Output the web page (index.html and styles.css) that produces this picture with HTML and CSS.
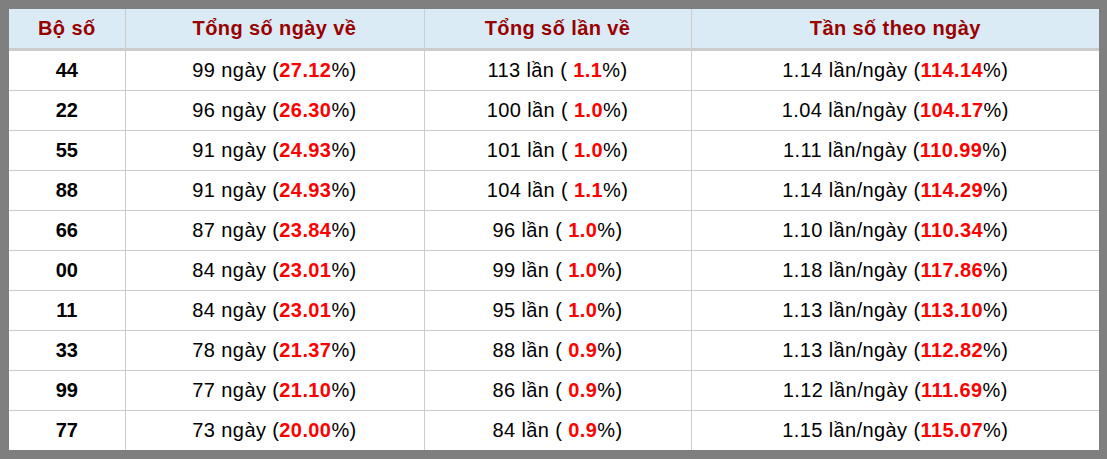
FILE: index.html
```html
<!DOCTYPE html>
<html lang="vi">
<head>
<meta charset="utf-8">
<link rel="stylesheet" href="styles.css">
</head>
<body>
<div class="frame">
<table class="stats">
<colgroup>
<col class="c1"><col class="c2"><col class="c3"><col class="c4">
</colgroup>
<thead>
<tr><th>Bộ số</th><th>Tổng số ngày về</th><th>Tổng số lần về</th><th>Tần số theo ngày</th></tr>
</thead>
<tbody>
<tr><td class="num">44</td><td>99 ngày (<b>27.12</b>%)</td><td>113 lần ( <b>1.1</b>%)</td><td>1.14 lần/ngày (<b>114.14</b>%)</td></tr>
<tr><td class="num">22</td><td>96 ngày (<b>26.30</b>%)</td><td>100 lần ( <b>1.0</b>%)</td><td>1.04 lần/ngày (<b>104.17</b>%)</td></tr>
<tr><td class="num">55</td><td>91 ngày (<b>24.93</b>%)</td><td>101 lần ( <b>1.0</b>%)</td><td>1.11 lần/ngày (<b>110.99</b>%)</td></tr>
<tr><td class="num">88</td><td>91 ngày (<b>24.93</b>%)</td><td>104 lần ( <b>1.1</b>%)</td><td>1.14 lần/ngày (<b>114.29</b>%)</td></tr>
<tr><td class="num">66</td><td>87 ngày (<b>23.84</b>%)</td><td>96 lần ( <b>1.0</b>%)</td><td>1.10 lần/ngày (<b>110.34</b>%)</td></tr>
<tr><td class="num">00</td><td>84 ngày (<b>23.01</b>%)</td><td>99 lần ( <b>1.0</b>%)</td><td>1.18 lần/ngày (<b>117.86</b>%)</td></tr>
<tr><td class="num">11</td><td>84 ngày (<b>23.01</b>%)</td><td>95 lần ( <b>1.0</b>%)</td><td>1.13 lần/ngày (<b>113.10</b>%)</td></tr>
<tr><td class="num">33</td><td>78 ngày (<b>21.37</b>%)</td><td>88 lần ( <b>0.9</b>%)</td><td>1.13 lần/ngày (<b>112.82</b>%)</td></tr>
<tr><td class="num">99</td><td>77 ngày (<b>21.10</b>%)</td><td>86 lần ( <b>0.9</b>%)</td><td>1.12 lần/ngày (<b>111.69</b>%)</td></tr>
<tr><td class="num">77</td><td>73 ngày (<b>20.00</b>%)</td><td>84 lần ( <b>0.9</b>%)</td><td>1.15 lần/ngày (<b>115.07</b>%)</td></tr>
</tbody>
</table>
</div>
</body>
</html>
```

FILE: styles.css
```css
html, body {
  margin: 0;
  padding: 0;
  background: #fff;
}
.frame {
  width: 1107px;
  height: 459px;
  box-sizing: border-box;
  background: #7f7f7f;
  padding: 9px 8px 9px 9px;
}
.stats {
  width: 1090px;
  border-collapse: collapse;
  table-layout: fixed;
  background: #fff;
  font-family: "Liberation Sans", Arial, sans-serif;
  font-size: 20px;
  letter-spacing: 0.4px;
  color: #000;
}
.c1 { width: 116px; }
.c2 { width: 299px; }
.c3 { width: 267px; }
.c4 { width: 408px; }
.stats th {
  background: #daebf5;
  color: #990000;
  font-weight: bold;
  height: 39px;
  padding: 0;
  text-align: center;
  border-left: 1px solid #cccccc;
  border-bottom: 3px solid #cccccc;
  vertical-align: middle;
}
.stats td {
  height: 39px;
  padding: 0;
  text-align: center;
  vertical-align: middle;
  border-left: 1px solid #cccccc;
  border-top: 1px solid #cccccc;
}
.stats th:first-child, .stats td:first-child {
  border-left: none;
}
.stats tbody tr:first-child td {
  border-top: none;
}
.stats td.num {
  font-weight: bold;
  letter-spacing: 0;
}
.stats td b {
  color: #ff0000;
}
```
